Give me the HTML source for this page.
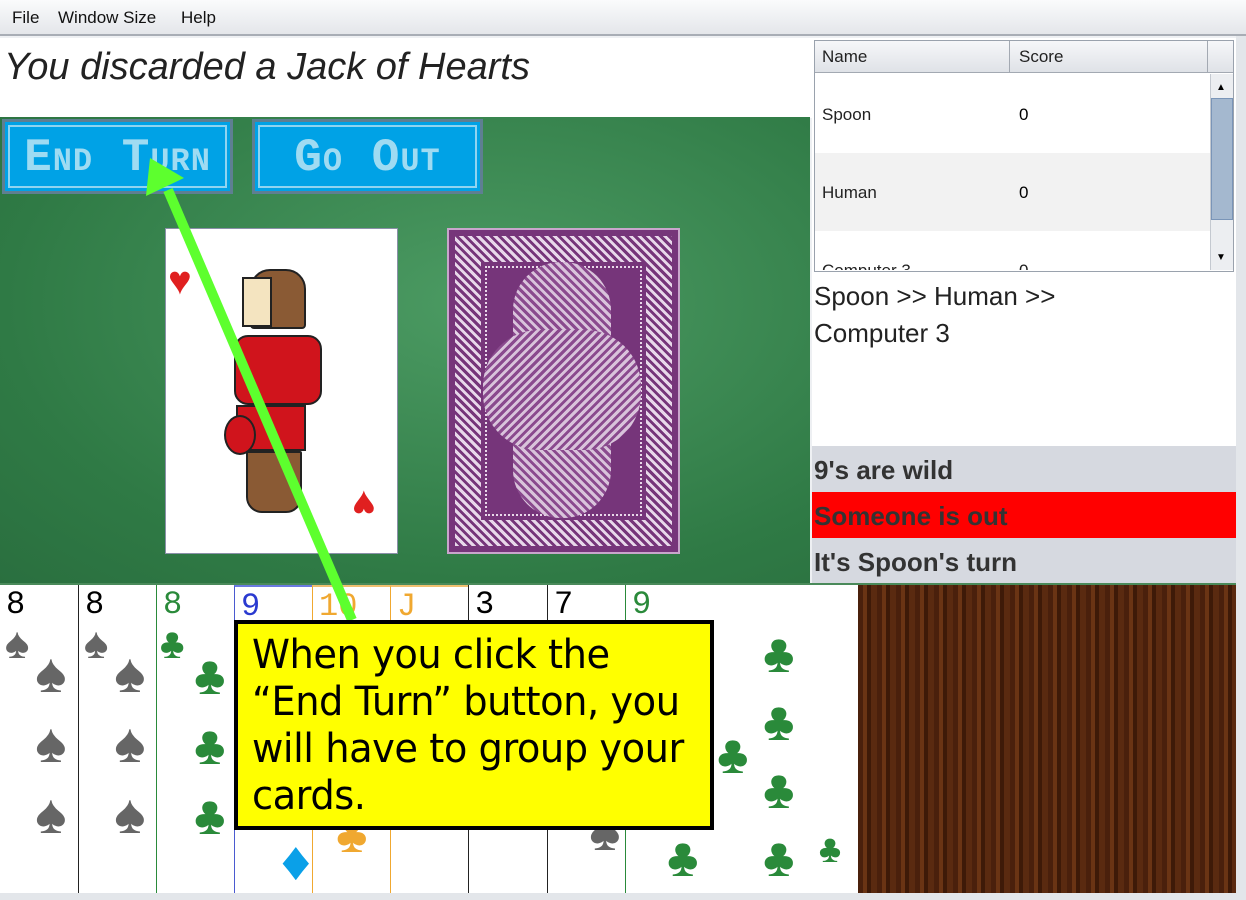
<!DOCTYPE html>
<html><head><meta charset="utf-8"><style>
*{margin:0;padding:0;box-sizing:border-box}
body{width:1246px;height:900px;overflow:hidden;background:#eef0f3;font-family:"Liberation Sans",sans-serif;position:relative}
.a{position:absolute}
.menu{left:0;top:0;width:1246px;height:36px;background:linear-gradient(#fafbfc,#e4e6ea);border-bottom:2px solid #a8adb5;font-size:17px;color:#111}
.menu span{position:absolute;top:8px}
.felt{left:0;top:117px;width:810px;height:466px;background:radial-gradient(ellipse at 60% 40%,#4c9b63,#2f7a45 70%,#2a6f3f)}
.btn{top:119px;height:75px;width:231px;background:#00a2e6;border:3px solid #5e7f92;color:#9fdbf2;font:bold 46px "Liberation Mono",monospace;letter-spacing:1px}
.btn div{position:absolute;left:3px;top:3px;right:3px;bottom:3px;border:2px solid #8fd4f0;text-align:center;line-height:62px}
.card{background:#fff;border:1px solid #8a90a8}
.hc{top:585px;height:308px;width:79px;background:#fff;border-left:1px solid #222;font:32px "Liberation Mono",monospace;padding-left:6px;line-height:40px;overflow:hidden}
.s{position:absolute;font-size:56px;line-height:56px}
.lbl{left:812px;width:424px;height:46px;font:bold 26px "Liberation Sans",sans-serif;color:#333;line-height:48px;padding-left:2px}
.tip{left:234px;top:620px;width:480px;height:210px;background:#ffff00;border:4px solid #000;color:#000}
.tip div{position:absolute;left:14px;white-space:nowrap;font-family:"DejaVu Sans",sans-serif;font-size:40px;transform:scaleX(0.96);transform-origin:0 0;letter-spacing:-0.5px}
</style></head><body>
<div class="a menu"><span style="left:12px">File</span><span style="left:58px">Window Size</span><span style="left:181px">Help</span></div>
<div class="a" style="left:0;top:38px;width:812px;height:80px;background:#fff;font-style:italic;font-size:38px;color:#222;padding:8px 0 0 4px">You discarded a Jack of Hearts</div>
<div class="a felt"></div>
<div class="a btn" style="left:2px"><div>E<span style="font-size:32px">ND</span> T<span style="font-size:32px">URN</span></div></div>
<div class="a btn" style="left:252px"><div>G<span style="font-size:32px">O</span> O<span style="font-size:32px">UT</span></div></div>
<div class="a card" style="left:165px;top:228px;width:233px;height:326px">
 <div class="a" style="left:2px;top:30px;color:#e02020;font-size:40px">♥</div>
 <div class="a" style="left:186px;top:252px;color:#e02020;font-size:40px;transform:rotate(180deg)">♥</div>
 <div class="a" style="left:84px;top:40px;width:56px;height:60px;background:#8a5a34;border:2px solid #222;border-radius:20px 20px 4px 4px"></div>
 <div class="a" style="left:76px;top:48px;width:30px;height:50px;background:#f4e4c0;border:2px solid #222"></div>
 <div class="a" style="left:68px;top:106px;width:88px;height:70px;background:#d0141c;border:2px solid #222;border-radius:14px"></div>
 <div class="a" style="left:70px;top:176px;width:70px;height:46px;background:#d0141c;border:2px solid #222"></div>
 <div class="a" style="left:58px;top:186px;width:32px;height:40px;background:#d0141c;border:2px solid #222;border-radius:50%"></div>
 <div class="a" style="left:80px;top:222px;width:56px;height:62px;background:#8a5a34;border:2px solid #222;border-radius:2px 2px 16px 16px"></div>
</div>
<div class="a" style="left:447px;top:228px;width:233px;height:326px;background:#76357a;border:2px solid #c9a6cc">
 <div class="a" style="left:6px;top:6px;right:6px;bottom:6px;border:26px solid transparent;border-image:repeating-linear-gradient(45deg,#e8d8ea 0 3px,#76357a 3px 6px) 26"></div>
 <div class="a" style="left:36px;top:36px;right:36px;bottom:36px;border:2px dotted #e9d9ea"></div>
 <div class="a" style="left:64px;top:32px;width:98px;height:256px;border-radius:48px;background:repeating-linear-gradient(45deg,#d9c3db 0 3px,#8a4a8e 3px 6px)"></div>
 <div class="a" style="left:34px;top:100px;width:158px;height:120px;border-radius:56px;background:repeating-linear-gradient(-45deg,#d9c3db 0 3px,#8a4a8e 3px 6px)"></div>
</div>
<div class="a" style="left:812px;top:38px;width:424px;height:545px;background:#fff"></div>
<div class="a" style="left:814px;top:40px;width:420px;height:232px;border:1px solid #9aa2ad;background:#fff"></div>
<div class="a" style="left:815px;top:41px;width:418px;height:32px;background:linear-gradient(#f6f7f9,#dfe2e7);border-bottom:1px solid #a3a9b2;font-size:17px;color:#222">
 <span class="a" style="left:7px;top:6px">Name</span><span class="a" style="left:204px;top:6px">Score</span>
 <div class="a" style="left:194px;top:0;width:1px;height:32px;background:#a3a9b2"></div>
 <div class="a" style="left:392px;top:0;width:1px;height:32px;background:#a3a9b2"></div></div>
<div class="a" style="left:815px;top:153px;width:395px;height:78px;background:#f2f2f2"></div>
<div class="a" style="left:822px;top:105px;font-size:17px;color:#222">Spoon</div><div class="a" style="left:1019px;top:105px;font-size:17px">0</div>
<div class="a" style="left:822px;top:183px;font-size:17px;color:#222">Human</div><div class="a" style="left:1019px;top:183px;font-size:17px">0</div>
<div class="a" style="left:815px;top:258px;width:395px;height:12px;overflow:hidden"><div class="a" style="left:7px;top:3px;font-size:17px;color:#222">Computer 3</div><div class="a" style="left:204px;top:3px;font-size:17px;color:#222">0</div></div>
<div class="a" style="left:1210px;top:74px;width:23px;height:196px;background:#eceef1;border-left:1px solid #c4c9d0">
 <div class="a" style="left:5px;top:8px;font-size:10px">▲</div>
 <div class="a" style="left:0;top:24px;width:22px;height:122px;background:#a4b8cf;border:1px solid #7a95b8"></div>
 <div class="a" style="left:5px;top:178px;font-size:10px">▼</div></div>
<div class="a" style="left:814px;top:278px;font-size:26px;color:#222;line-height:37px">Spoon &gt;&gt; Human &gt;&gt;<br>Computer 3</div>
<div class="a lbl" style="top:446px;background:#d6d9e0">9's are wild</div>
<div class="a lbl" style="top:492px;background:#ff0000">Someone is out</div>
<div class="a lbl" style="top:538px;background:#d6d9e0;height:45px">It's Spoon's turn</div>
<div class="a" style="left:1236px;top:36px;width:10px;height:864px;background:#e3e6ea"></div>
<div class="a" style="left:0;top:583px;width:1236px;height:2px;background:#4a8a5a"></div>
<div class="a hc" style="left:0;border-left:none">8<div class="s" style="left:4px;top:34px;color:#666;font-size:44px">♠</div><div class="s" style="left:34px;top:64px;color:#666">♠</div><div class="s" style="left:34px;top:134px;color:#666">♠</div><div class="s" style="left:34px;top:205px;color:#666">♠</div></div>
<div class="a hc" style="left:78px">8<div class="s" style="left:4px;top:34px;color:#666;font-size:44px">♠</div><div class="s" style="left:34px;top:64px;color:#666">♠</div><div class="s" style="left:34px;top:134px;color:#666">♠</div><div class="s" style="left:34px;top:205px;color:#666">♠</div></div>
<div class="a hc" style="left:156px;border-left-color:#2a8a3a;color:#2a8a3a">8<div class="s" style="left:2px;top:34px;font-size:44px">♣</div><div class="s" style="left:36px;top:66px">♣</div><div class="s" style="left:36px;top:136px">♣</div><div class="s" style="left:36px;top:206px">♣</div></div>
<div class="a hc" style="left:234px;border-left-color:#4a5ad0;color:#2a3ad0;border-top:2px solid #6a7ae0">9<div class="s" style="left:44px;top:250px;color:#0aa0e8">♦</div></div>
<div class="a hc" style="left:312px;border-left-color:#f0a830;color:#f0a830;border-top:2px solid #f0c070">10<div class="s" style="left:22px;top:222px">♣</div></div>
<div class="a hc" style="left:390px;border-left-color:#f0a830;color:#f0a830;border-top:2px solid #f0c070">J</div>
<div class="a hc" style="left:468px">3</div>
<div class="a hc" style="left:547px">7<div class="s" style="left:40px;top:222px;color:#666">♠</div></div>
<div class="a hc" style="left:625px;width:233px;border-left-color:#2a8a3a;color:#2a8a3a">9<div class="s" style="left:136px;top:44px">♣</div><div class="s" style="left:136px;top:112px">♣</div><div class="s" style="left:136px;top:180px">♣</div><div class="s" style="left:136px;top:248px">♣</div><div class="s" style="left:90px;top:145px">♣</div><div class="s" style="left:40px;top:248px">♣</div><div class="s" style="left:192px;top:240px;font-size:40px">♣</div></div>
<div class="a" style="left:858px;top:585px;width:378px;height:308px;background:repeating-linear-gradient(90deg,#4a200c 0 5px,#6a3414 5px 9px,#3e1a08 9px 13px,#5a2a10 13px 19px)"></div>
<div class="a" style="left:0;top:893px;width:1246px;height:7px;background:#e3e6ea"></div>
<svg class="a" style="left:0;top:0" width="1246" height="900"><line x1="352" y1="620" x2="168" y2="190" stroke="#5dff2e" stroke-width="10"/><polygon points="150,158 184,178 146,196" fill="#5dff2e"/></svg>
<div class="a tip">
 <div style="top:8px">When you click the</div>
 <div style="top:55px">“End Turn” button, you</div>
 <div style="top:102px">will have to group your</div>
 <div style="top:149px">cards.</div>
</div>
</body></html>
